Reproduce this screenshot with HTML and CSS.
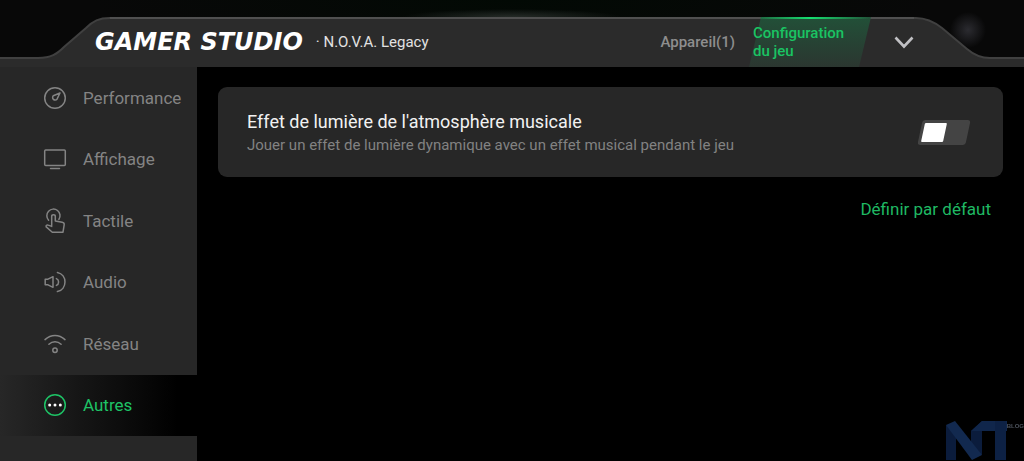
FILE: index.html
```html
<!DOCTYPE html>
<html lang="fr">
<head>
  <meta charset="utf-8">
  <meta name="viewport" content="width=device-width, initial-scale=1">
  <title>Gamer Studio</title>
  <link rel="stylesheet" href="styles.css">
</head>
<body>
  <header class="header">
    <div class="header-shape" aria-hidden="true">
      <svg class="corner" width="110" height="50" viewBox="0 0 110 50">
        <path fill="#2b2b2b" d="M0 41H38C51 41 57 37 64 30L86 11C93 4 99 1 110 1V50H0Z"/>
        <path fill="none" stroke="#404040" stroke-width="2" d="M0 41H38C51 41 57 37 64 30L86 11C93 4 99 1 110 1"/>
      </svg>
      <div class="header-fill"></div>
      <svg class="corner" width="110" height="50" viewBox="0 0 110 50">
        <path fill="#2b2b2b" d="M110 41H76C66 41 60 38 53 32L28 11C19 4 12 1 2 1H0V50H110Z"/>
        <path fill="none" stroke="#404040" stroke-width="2" d="M110 41H76C66 41 60 38 53 32L28 11C19 4 12 1 2 1H0"/>
      </svg>
    </div>

    <h1 class="logo">GAMER STUDIO</h1>
    <p class="game">· N.O.V.A. Legacy</p>
    <nav class="tabs">
      <a class="tab" href="#appareil">Appareil(1)</a>
      <a class="tab tab-active" href="#configuration">Configuration<br>du jeu</a>
    </nav>
    <button class="collapse" type="button" aria-label="Réduire">
      <svg width="20" height="13" viewBox="0 0 20 13" fill="none" stroke="#c0c0c4" stroke-width="2.6">
        <path d="M1.5 1.5L10 10.5L18.5 1.5"/>
      </svg>
    </button>
  </header>

  <div class="layout">
    <nav class="sidebar">
      <a class="item" href="#performance">
        <svg class="icon" viewBox="0 0 24 24">
          <circle cx="12" cy="12" r="10.3"/>
          <path d="M17 7L10.3 9.8A2.4 2.4 0 1 0 14 13.2Z"/>
        </svg>
        Performance
      </a>
      <a class="item" href="#affichage">
        <svg class="icon" viewBox="0 0 24 24">
          <rect x="1.7" y="3" width="20.6" height="15.6" rx="1"/>
          <path d="M7.5 21.6H16.5"/>
        </svg>
        Affichage
      </a>
      <a class="item" href="#tactile">
        <svg class="icon" viewBox="0 0 24 24">
          <path d="M5.6 11.2A6.6 6.6 0 1 1 15.9 10.4"/>
          <path d="M8.7 16.4V7.4C8.7 5.2 12.3 5.2 12.3 7.4V12L19.2 13.2C20.8 13.5 21.3 14.2 21.2 15.6L20 23.2H9.3L3.2 17.9C2.6 16.5 4 15.6 5.2 16.1L8.7 17.4"/>
        </svg>
        Tactile
      </a>
      <a class="item" href="#audio">
        <svg class="icon" viewBox="0 0 24 24">
          <path d="M2.2 9.2H5L10 6.7V17.3L5 14.8H2.2Z"/>
          <path d="M13.4 8.6C16.3 9.8 16.3 14.2 13.4 15.4"/>
          <path d="M14.4 2.4C24.5 4.6 24.5 19.4 14.4 21.6"/>
        </svg>
        Audio
      </a>
      <a class="item" href="#reseau">
        <svg class="icon" viewBox="0 0 24 24">
          <path d="M2 7.6C8 2.2 16 2.2 22 7.6"/>
          <path d="M5.9 12.3C9.5 8.9 14.5 8.9 18.1 12.3"/>
          <circle cx="12" cy="18.3" r="2.2"/>
        </svg>
        Réseau
      </a>
      <a class="item item-active" href="#autres">
        <svg class="icon" viewBox="0 0 24 24">
          <circle cx="12" cy="12" r="10.3"/>
          <g class="dots">
            <circle cx="6.7" cy="12" r="1.5"/>
            <circle cx="12" cy="12" r="1.5"/>
            <circle cx="17.3" cy="12" r="1.5"/>
          </g>
        </svg>
        Autres
      </a>
    </nav>

    <main class="content">
      <section class="card">
        <label class="card-text" for="musicLight">
          <span class="card-title">Effet de lumière de l'atmosphère musicale</span>
          <span class="card-note">Jouer un effet de lumière dynamique avec un effet musical pendant le jeu</span>
        </label>
        <input class="switch" type="checkbox" id="musicLight">
      </section>
      <button class="reset" type="button">Définir par défaut</button>
    </main>
  </div>

  <div class="watermark">
    <svg width="62" height="40" viewBox="0 0 62 40" aria-hidden="true">
      <path fill="#0b1c3c" d="M1 5L11 11V40H1Z"/>
      <path fill="#0b1c3c" d="M26 11L37 1V35L26 30Z"/>
      <path fill="#12294f" d="M1 5L10 1L37 35L27 40Z"/>
      <path fill="#10264b" d="M37 1H62V11H26Z"/>
      <path fill="#0d2144" d="M50 1H61V40H50Z"/>
    </svg>
    <span class="watermark-text">BLOG</span>
  </div>
</body>
</html>
```
FILE: styles.css
```css
* {
  box-sizing: border-box;
}

body {
  margin: 0;
  min-height: 100vh;
  display: flex;
  flex-direction: column;
  background-color: #000;
  color: #f2f2f2;
  font-family: Roboto, "Liberation Sans", sans-serif;
  font-size: 16px;
}

a {
  color: inherit;
  text-decoration: none;
}

button {
  padding: 0;
  border: 0;
  background: none;
  font: inherit;
  cursor: pointer;
}

/* header */
.header {
  position: relative;
  display: flex;
  align-items: center;
  height: 67px;
  padding: 17px 110px 0 95px;
  background:
    radial-gradient(circle at calc(100% - 56px) 30px, #2b2b30 0, transparent 18px),
    radial-gradient(ellipse 110px 8px at 50% 17px, #252b27, transparent),
    radial-gradient(ellipse 420px 60px at 50% 0, #020904, #080808);
}

.header-shape {
  position: absolute;
  inset: 17px 0 0;
  display: flex;
}

.corner {
  flex: none;
}

.header-fill {
  flex: 1;
  border-top: 2px solid #505050;
  background-color: #2b2b2b;
}

.logo,
.game,
.tabs,
.collapse {
  position: relative;
}

.logo {
  margin: 0;
  color: #fff;
  font: italic bold 24px/26px "DejaVu Sans", sans-serif;
  white-space: nowrap;
}

.game {
  margin: 0 0 0 13px;
  color: #e2e2e2;
  font-size: 15px;
  white-space: nowrap;
}

.tabs {
  display: flex;
  align-items: center;
  align-self: stretch;
  margin-left: auto;
  color: #8e8e8e;
  font-size: 15px;
  font-weight: 500;
}

.tab-active {
  position: relative;
  display: flex;
  align-items: center;
  align-self: stretch;
  width: 122px;
  margin-left: 14px;
  padding-left: 4px;
  color: #1ac463;
  line-height: 18px;
}

/* slanted panel behind the active tab */
.tab-active::before {
  content: "";
  position: absolute;
  inset: 0;
  z-index: -1;
  background:
    linear-gradient(90deg, transparent, #16e070, transparent) top / 100% 2px no-repeat,
    linear-gradient(#225038, #2b3630);
  clip-path: polygon(12px 0, 100% 0, 110px 100%, 0 100%);
}

.tabs {
  z-index: 0;
}

.collapse {
  display: flex;
  margin-left: 23px;
}

/* side menu */
.layout {
  flex: 1;
  display: flex;
}

.sidebar {
  flex: none;
  display: grid;
  grid-auto-rows: 1fr;
  width: 197px;
  padding-bottom: 25px;
  background-color: #272727;
}

.item {
  display: flex;
  align-items: center;
  gap: 16px;
  padding-left: 43px;
  color: #848484;
  font-size: 17px;
}

.item-active {
  background: linear-gradient(90deg, #272727, #000 90%);
  color: #1ec366;
}

.icon {
  width: 24px;
  height: 24px;
  overflow: visible;
  fill: none;
  stroke: currentColor;
  stroke-width: 1.5;
  stroke-linejoin: round;
  stroke-linecap: round;
}

.dots {
  fill: #fff;
  stroke: none;
}

/* content */
.content {
  flex: 1;
  padding: 20px 21px;
}

.card {
  display: flex;
  align-items: center;
  justify-content: space-between;
  padding: 22px 32px 22px 29px;
  border-radius: 9px;
  background-color: #272727;
}

.card-title,
.card-note {
  display: block;
}

.card-title {
  font-size: 18px;
  line-height: 26px;
}

.card-note {
  color: #828282;
  font-size: 15px;
  line-height: 20px;
}

.switch {
  appearance: none;
  flex: none;
  width: 48px;
  height: 25px;
  margin: 0 3px;
  padding: 3px;
  border-radius: 3px;
  background-color: #444;
  transform: skewX(-12deg);
  cursor: pointer;
}

.switch::before {
  content: "";
  display: block;
  width: 22px;
  height: 19px;
  border-radius: 1px;
  background-color: #fff;
}

.switch:checked {
  background-color: #1ac463;
}

.switch:checked::before {
  margin-left: auto;
}

.reset {
  display: block;
  margin: 22px 12px 0 auto;
  color: #1fb863;
  font-size: 17px;
  line-height: 20px;
}

/* blog mark laid over the page corner */
.watermark {
  position: fixed;
  right: 0;
  bottom: 1px;
  display: flex;
}

.watermark-text {
  color: #4c525c;
  font: bold 6px/12px "Liberation Sans", sans-serif;
}
```
